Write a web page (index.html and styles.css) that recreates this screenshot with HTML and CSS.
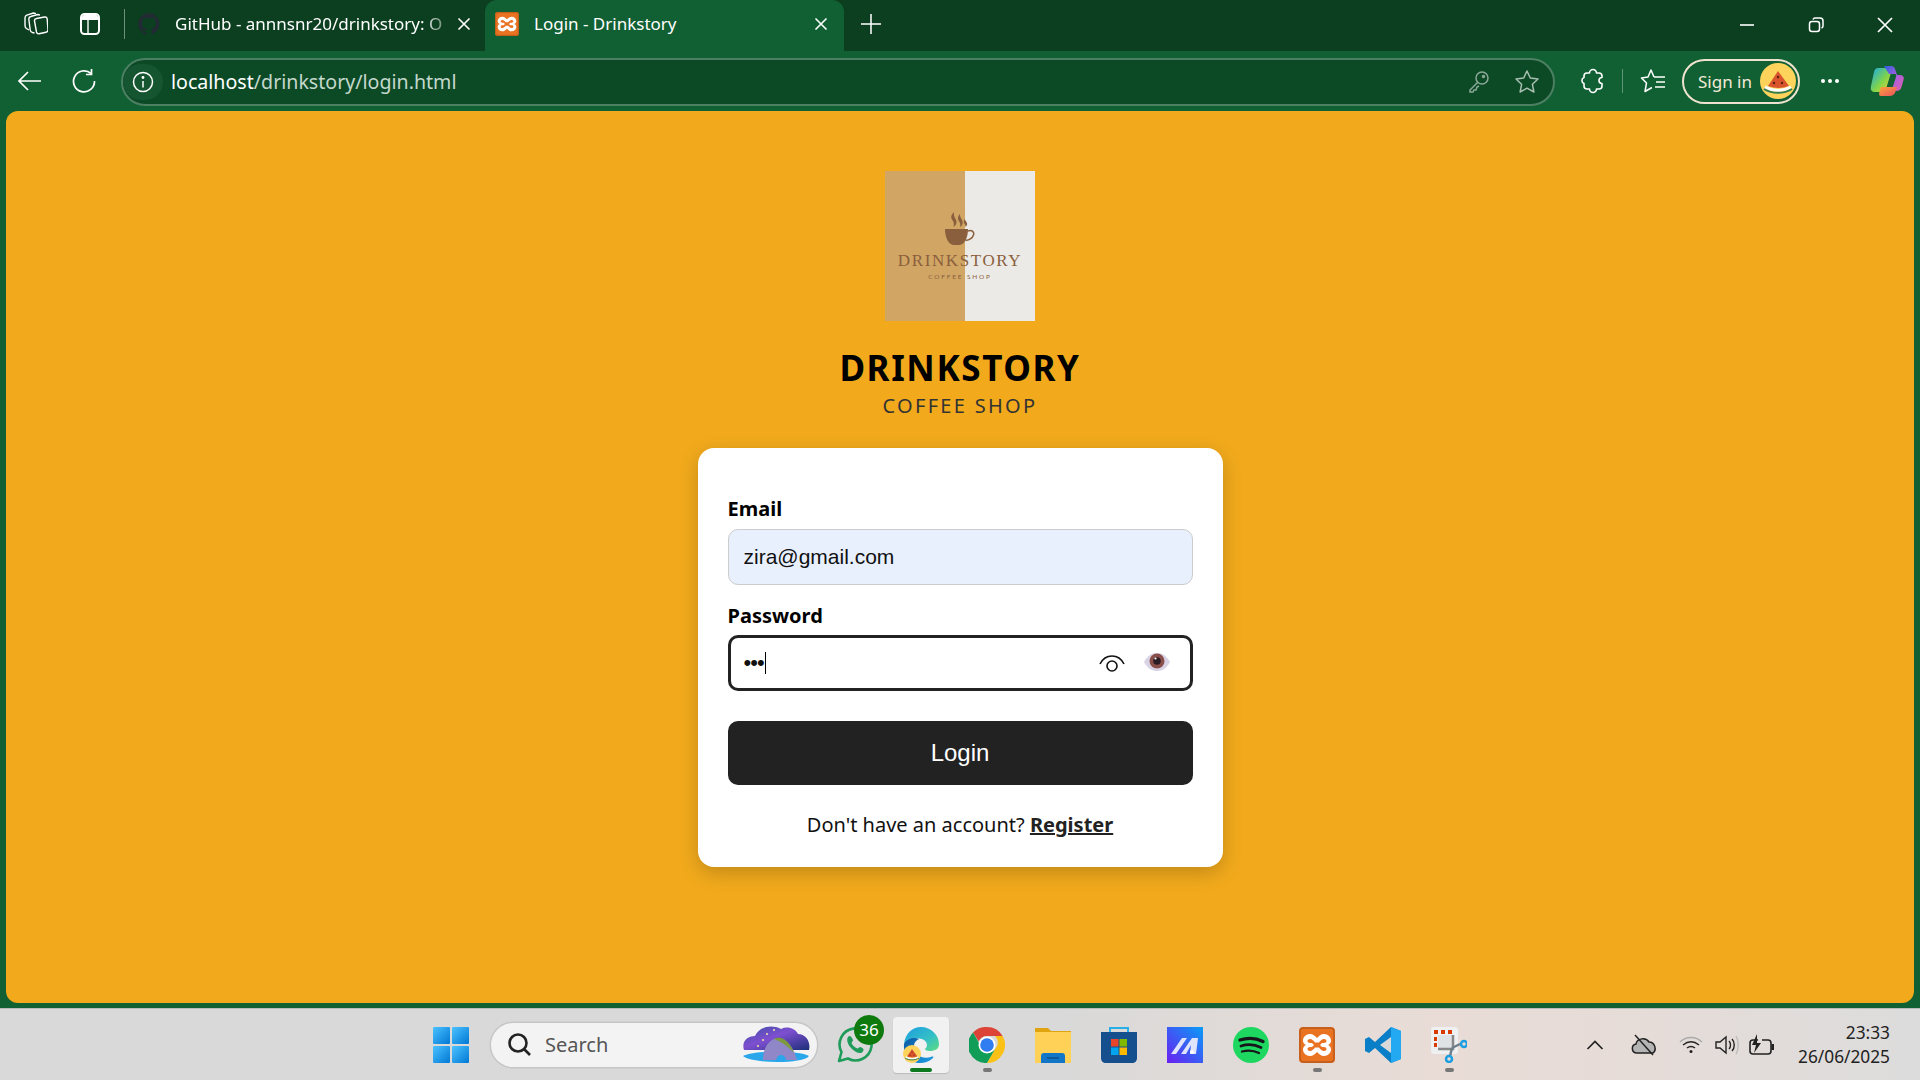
FILE: index.html
```html
<!DOCTYPE html>
<html lang="en">
<head>
<meta charset="utf-8">
<title>Login - Drinkstory</title>
<link rel="stylesheet" href="styles.css">
</head>
<body>
<svg class="defs" width="0" height="0" aria-hidden="true">
  <defs>
    <g id="xampp">
      <rect x="0" y="0" width="36" height="36" rx="4" fill="#ea7322"/>
      <rect x="1" y="1" width="34" height="34" rx="3.500" fill="none" stroke="#b85a1c" stroke-width="1.400"/>
      <path d="M11 7c3 0 5 2 7 4 2-2 4-4 7-4 4 0 7 3 7 6.500 0 2-1 3.500-3 4.500 2 1 3 2.500 3 4.500 0 3.500-3 6.500-7 6.500-3 0-5-2-7-4-2 2-4 4-7 4-4 0-7-3-7-6.500 0-2 1-3.500 3-4.500-2-1-3-2.500-3-4.500C4 10 7 7 11 7z" fill="#fff"/>
      <path d="M11 12c-1.500 0-2.500 1-2.500 2 0 1.200 1.200 2 2.500 2h2l2 2-2 2h-2c-1.300 0-2.500.800-2.500 2 0 1 1 2 2.500 2 2 0 4-2 5-3.500h4c1 1.500 3 3.500 5 3.500 1.500 0 2.500-1 2.500-2 0-1.200-1.200-2-2.500-2h-2l-2-2 2-2h2c1.300 0 2.500-.800 2.500-2 0-1-1-2-2.500-2-2 0-4 2-5 3.500h-4c-1-1.500-3-3.500-5-3.500z" fill="#ea7322"/>
    </g>
    <g id="melon">
      <circle cx="18" cy="18" r="18" fill="#fdd35c"/>
      <path d="M8 23 18 8l11 15c-7 2.500-14 2.500-21 0z" fill="#d9532c"/>
      <path d="M5 24c8 4.500 18 4.500 26 0" fill="none" stroke="#fff" stroke-width="3"/>
      <path d="M4 26c8 5 20 5 28 0" fill="none" stroke="#2f7d4f" stroke-width="2"/>
      <g fill="#5a2412"><circle cx="18" cy="14" r="1.200"/><circle cx="14" cy="20" r="1.200"/><circle cx="22" cy="20" r="1.200"/></g>
    </g>
    <linearGradient id="edgeA" x1="0" y1="0" x2="1" y2="1"><stop offset="0" stop-color="#1b9de2"/><stop offset=".6" stop-color="#35c1c4"/><stop offset="1" stop-color="#5fdc7e"/></linearGradient>
    <linearGradient id="edgeB" x1="0" y1="0" x2="1" y2="1"><stop offset="0" stop-color="#0c59a4"/><stop offset="1" stop-color="#1b9de2"/></linearGradient>
    <linearGradient id="startG" x1="0" y1="0" x2="1" y2="1"><stop offset="0" stop-color="#4cc2ff"/><stop offset="1" stop-color="#0078d4"/></linearGradient>
    <linearGradient id="mG" x1="0" y1="1" x2="1" y2="0"><stop offset="0" stop-color="#6a1ff0"/><stop offset="1" stop-color="#0a9cf8"/></linearGradient>
    <linearGradient id="skyG" x1="0" y1="0" x2="1" y2="1"><stop offset="0" stop-color="#3f4fa8"/><stop offset=".45" stop-color="#7e4fd0"/><stop offset="1" stop-color="#1c2f78"/></linearGradient>
    <linearGradient id="copA" x1="0" y1="0" x2="1" y2="1"><stop offset="0" stop-color="#18a8e8"/><stop offset=".55" stop-color="#7fd44b"/><stop offset="1" stop-color="#f7d23a"/></linearGradient>
    <linearGradient id="copB" x1="0" y1="0" x2="1" y2="1"><stop offset="0" stop-color="#2a5fe0"/><stop offset=".5" stop-color="#a85fe0"/><stop offset="1" stop-color="#e25fa8"/></linearGradient>
    <linearGradient id="copC" x1="0" y1="0" x2="1" y2="1"><stop offset="0" stop-color="#f8a43a"/><stop offset="1" stop-color="#ee4f5f"/></linearGradient>
  </defs>
</svg>

<div class="screen">
  <header class="tabstrip">
    <div class="strip-left">
      <span class="tool"><svg width="24" height="24" viewBox="0 0 24 24" fill="none" stroke="#fff" stroke-width="1.400" stroke-linejoin="round"><path d="M12.500 6.500 20.500 5q2.500-.300 2.700 2l.8 11q0 2-2 2.300l-7 1.500q-2 .300-2.500-1.800L10.500 9q-.3-2 2-2.500z"/><path d="M10.500 21l-2-.500q-2-.600-2.300-2.500L4.800 7q0-2 2-2.500l7-2 2.200.700"/><path d="M5 18 2.500 16.500Q1 15.500 1 13.500L1 6q0-2 1.800-2.800L9.500 1l2.500.700"/></svg></span>
      <span class="tool"><svg width="22" height="24" viewBox="0 0 22 24"><rect x="2" y="2" width="18" height="20" rx="3.500" fill="none" stroke="#fff" stroke-width="2"/><path d="M3 8V5q0-2 2-2h12q2 0 2 2v3z" fill="#fff"/><path d="M9 8v13" stroke="#fff" stroke-width="1.400"/></svg></span>
      <span class="strip-div"></span>
    </div>
    <div class="tab">
      <svg class="tab-ico" width="24" height="24" viewBox="0 0 24 24" fill="#222a33"><path d="M12 1a11 11 0 0 0-3.500 21.400c.5.100.7-.2.700-.5v-2c-3 .6-3.700-1.400-3.700-1.400-.5-1.200-1.200-1.600-1.200-1.600-1-.7.100-.7.100-.7 1.100.1 1.700 1.100 1.700 1.100 1 1.700 2.600 1.200 3.200.9.100-.7.400-1.200.7-1.500-2.400-.3-5-1.200-5-5.400 0-1.200.4-2.200 1.100-2.900-.1-.3-.5-1.400.1-2.900 0 0 .9-.3 3 1.100a10 10 0 0 1 5.500 0c2.100-1.400 3-1.100 3-1.100.6 1.500.2 2.600.1 2.900.7.8 1.100 1.700 1.100 2.900 0 4.200-2.600 5.100-5 5.400.4.300.8 1 .8 2v3c0 .3.200.6.800.5A11 11 0 0 0 12 1z"/></svg>
      <span class="tab-title">GitHub - annnsnr20/drinkstory: O</span>
      <svg class="tab-x" width="14" height="14" viewBox="0 0 14 14" stroke="#fff" stroke-width="1.600"><path d="M1.500 1.500l11 11M12.500 1.500l-11 11"/></svg>
    </div>
    <div class="tab tab-active">
      <svg class="tab-ico" width="24" height="24" viewBox="0 0 36 36"><use href="#xampp"/></svg>
      <span class="tab-title">Login - Drinkstory</span>
      <svg class="tab-x" width="14" height="14" viewBox="0 0 14 14" stroke="#fff" stroke-width="1.600"><path d="M1.500 1.500l11 11M12.500 1.500l-11 11"/></svg>
    </div>
    <span class="newtab"><svg width="22" height="22" viewBox="0 0 22 22" stroke="#fff" stroke-width="1.500"><path d="M11 1v20M1 11h20"/></svg></span>
    <div class="winctl">
      <span class="winbtn"><svg width="16" height="16" viewBox="0 0 16 16" stroke="#fff" stroke-width="1.600"><path d="M1 8h14"/></svg></span>
      <span class="winbtn"><svg width="16" height="16" viewBox="0 0 16 16" fill="none" stroke="#fff" stroke-width="1.500"><rect x="1.500" y="4.500" width="10" height="10" rx="2.500"/><path d="M5 2.500Q5.500 1 7 1h5q3 0 3 3v5q0 1.500-1.500 2"/></svg></span>
      <span class="winbtn"><svg width="16" height="16" viewBox="0 0 16 16" stroke="#fff" stroke-width="1.700"><path d="M1 1l14 14M15 1 1 15"/></svg></span>
    </div>
  </header>

  <nav class="toolbar">
    <span class="navbtn"><svg width="26" height="24" viewBox="0 0 26 24" fill="none" stroke="#fff" stroke-width="1.700"><path d="M24 12H2M11 3l-9 9 9 9"/></svg></span>
    <span class="navbtn"><svg width="26" height="26" viewBox="0 0 26 26" fill="none" stroke="#fff" stroke-width="1.700"><path d="M20 5.500A10.500 10.500 0 1 0 23.500 13"/><path d="M20.500 1v5.500H15"/></svg></span>
    <div class="urlbar">
      <span class="siteinfo"><svg width="22" height="22" viewBox="0 0 22 22" fill="none" stroke="#fff" stroke-width="1.500"><circle cx="11" cy="11" r="9.500"/><path d="M11 10v6.500"/><circle cx="11" cy="6.500" r=".7" fill="#fff"/></svg></span>
      <span class="url"><span class="url-host">localhost</span>/drinkstory/login.html</span>
      <span class="url-actions">
        <svg width="22" height="24" viewBox="0 0 22 24" fill="none" stroke="#8aa897" stroke-width="1.500"><circle cx="14" cy="8" r="6"/><path d="M10 12 2 20v2h3l1-2h2l1-3 2-1"/><circle cx="15.500" cy="6.500" r="1"/></svg>
        <svg width="26" height="26" viewBox="0 0 26 26" fill="none" stroke="#a8bfb1" stroke-width="1.500" stroke-linejoin="round"><path d="M13 2l3.300 7 7.700 1-5.600 5.300 1.500 7.700-6.900-3.800L6.100 23l1.500-7.700L2 10l7.700-1z"/></svg>
      </span>
    </div>
    <span class="navicon nav-ext"><svg width="26" height="26" viewBox="-2 0 26 26" fill="none" stroke="#fff" stroke-width="1.600" stroke-linejoin="round"><path d="M7.500 5A3.500 3.500 0 0 1 14.500 5H17Q20 5 20 8V9.500A3 3 0 0 0 20 15.500V18Q20 21 17 21H14.500A3.500 3.500 0 0 1 7.500 21H5Q2 21 2 18V15.500A3.200 3.200 0 0 1 2 9.500V8Q2 5 5 5z"/></svg></span>
    <span class="nav-div"></span>
    <span class="navicon"><svg width="26" height="26" viewBox="0 0 26 26" fill="none" stroke="#fff" stroke-width="1.500" stroke-linejoin="round"><path d="M14 9 11 2 8 9 1.500 10l5 5L5 23.500 12 19.500"/><path d="M14 9H25M16 14H25M15 19H25"/></svg></span>
    <div class="signin">
      <span class="signin-text">Sign in</span>
      <svg width="36" height="36" viewBox="0 0 36 36"><use href="#melon"/></svg>
    </div>
    <span class="navicon nav-dots"><svg width="20" height="6" viewBox="0 0 20 6" fill="#fff"><circle cx="3" cy="3" r="2"/><circle cx="10" cy="3" r="2"/><circle cx="17" cy="3" r="2"/></svg></span>
    <span class="navicon nav-cop"><svg width="34" height="32" viewBox="0 0 34 32"><path d="M8 3h10c2 0 3 1 3.500 3L16 24c-.5 2-2 3-4 3H5c-3 0-5-2-4-6L4 7c.5-2.500 2-4 4-4z" fill="url(#copA)"/><path d="M14 1h7c2 0 3.500 1 4 3l2 6h3c3 0 4.500 2 3.500 5l-2 7c-1 3-3 4-5 4h-5L26 12c.5-2 0-3-1-3h-6z" fill="url(#copB)"/><path d="M11 22h13l3 0c-1 5-3 9-7 9h-9c-3 0-2-3 0-9z" fill="url(#copC)"/></svg></span>
  </nav>

  <main class="page">
    <div class="logo">
      <svg class="logo-cup" width="30" height="34" viewBox="0 0 30 34" fill="#8a5f3d"><path d="M9 0c-4 4-3 6-1 9 1 2 1 4 .5 6 3-2 4-5 2-8-1-2-2-4-1.500-7zM15 2c-3 3-2 6-.500 8 1 1.500 1 3 .5 5 2.500-1.500 3.500-4 2-7-1-2-2.200-3.500-2-6zM20 7c-2 2-1 4 0 5.500.5 1 .5 1.800.2 2.500 2-1 2.500-3 1.300-5-.8-1-1.500-1.800-1.500-3z"/><path d="M0 17h23c0 8-3 15-8 16H8C3 32 0 25 0 17z"/><path d="M23 19c4-1.500 6.500 1 5.500 4-1 3-4 5-8 5.500" fill="none" stroke="#8a5f3d" stroke-width="1.500"/></svg>
      <span class="logo-name">DRINKSTORY</span>
      <span class="logo-sub">COFFEE SHOP</span>
    </div>
    <h1 class="brand">DRINKSTORY</h1>
    <p class="brand-sub">COFFEE SHOP</p>
    <form class="card">
      <div class="group">
        <label class="label">Email</label>
        <div class="field field-filled">zira@gmail.com</div>
      </div>
      <div class="group">
        <label class="label">Password</label>
        <div class="field field-focus">
          <span class="dots">•••</span><span class="caret"></span>
          <svg class="eye-line" width="28" height="20" viewBox="0 0 28 20" fill="none" stroke="#111" stroke-width="1.600"><path d="M2 11C5 5 9 3 14 3s9 2 12 8"/><circle cx="14" cy="13" r="5"/></svg>
          <svg class="eye-emoji" width="28" height="20" viewBox="0 0 28 20"><path d="M1 10C5 3 9 1 14 1s9 2 13 9c-4 7-8 9-13 9S5 17 1 10z" fill="#d9d3e6"/><circle cx="14" cy="9" r="7.500" fill="#8a4f4a"/><circle cx="14" cy="9" r="3.800" fill="#2a1c24"/><circle cx="12.500" cy="6.500" r="1.100" fill="#fff"/></svg>
        </div>
      </div>
      <button class="btn" type="button">Login</button>
      <p class="foot">Don't have an account? <a class="reg" href="#">Register</a></p>
    </form>
  </main>

  <div class="green-edge"></div>

  <footer class="taskbar">
    <div class="tb-center">
      <span class="tb-start"><svg width="36" height="36" viewBox="0 0 36 36" fill="url(#startG)"><rect width="17" height="17" rx="1"/><rect x="19" width="17" height="17" rx="1"/><rect y="19" width="17" height="17" rx="1"/><rect x="19" y="19" width="17" height="17" rx="1"/></svg></span>
      <div class="search">
        <svg width="24" height="26" viewBox="0 0 24 26" fill="none" stroke="#222" stroke-width="2.600"><circle cx="11" cy="11" r="8.500"/><path d="M17 17l6 6"/></svg>
        <span class="search-text">Search</span>
        <svg class="search-art" width="70" height="42" viewBox="0 0 70 42"><path d="M3 26C0 16 8 12 14 12 18 3 30 0 40 5c6-3 14-1 17 5 8 0 13 8 11 16z" fill="url(#skyG)"/><path d="M2 32c10-6 56-6 66 0-6 8-56 8-66 0z" fill="#2aa6ea"/><path d="M22 36c0-10 4-20 14-22 10 1 16 8 20 22H45c-1-6-8-7-10 0z" fill="#8f87c8"/><path d="M33 15c8-4 16 3 20 14-5-6-12-11-20-14z" fill="#7d9a3c"/><g fill="#f6e6a8"><circle cx="33" cy="6" r="1"/><circle cx="26" cy="10" r="1"/><circle cx="22" cy="16" r="1"/><circle cx="17" cy="22" r="1"/></g></svg>
      </div>
      <span class="tb-app tb-wa">
        <svg width="38" height="38" viewBox="0 0 38 38" fill="none"><path d="M3 35l2.500-9A16 16 0 1 1 12 32.500z" stroke="#1f9c5a" stroke-width="2.600" stroke-linejoin="round"/><path d="M12 11c1-2 3-1 4 1l1 2c0 1-1 2-1.500 3 1 2.500 3 4.500 6 5.500 1-.5 2-2 3-1.500l2.500 1.500c1 1 .5 3-1 4-3 1.500-7-.5-10.500-4S10 14 12 11z" fill="#1f9c5a"/></svg>
        <span class="wa-badge">36</span>
      </span>
      <span class="tb-app tb-active">
        <svg width="36" height="36" viewBox="0 0 36 36"><path d="M1 17C2 7 9 0 18 0c10 0 18 8 18 17 0 5-4 7-9 7-3 0-5-1-5-2 3-2 3-8-3-10C12 10 4 12 1 17z" fill="url(#edgeA)"/><path d="M1 17c3-6 11-7 15-5-5 2-7 8-3 14 3 4 9 6 15 4 2-1 3 0 2 1-4 4-9 5-13 5C8 36 0 28 1 17z" fill="url(#edgeB)"/><svg x="0" y="18" width="18" height="18" viewBox="0 0 36 36"><use href="#melon"/></svg></svg>
        <span class="tb-pill"></span>
      </span>
      <span class="tb-app tb-open">
        <svg width="36" height="36" viewBox="0 0 36 36"><path d="M18 0a18 18 0 0 1 15.600 9H18a9 9 0 0 0-8.300 5.500L4 5.500A18 18 0 0 1 18 0z" fill="#db4437"/><path d="M33.600 9A18 18 0 0 1 18 36l7.800-13.500A9 9 0 0 0 26 9z" fill="#fbc116"/><path d="M4 5.500 11.800 19A8 8 0 0 0 25.800 22.500L18 36A18 18 0 0 1 4 5.500z" fill="#0f9d58"/><circle cx="18" cy="18" r="8.500" fill="#fff"/><circle cx="18" cy="18" r="6.800" fill="#2f7df0"/></svg>
        <span class="tb-dot"></span>
      </span>
      <span class="tb-app">
        <svg width="36" height="36" viewBox="0 0 36 36"><path d="M0 1h13l3 3h20v6H0z" fill="#e0a410"/><rect y="5" width="36" height="31" fill="#ffd257"/><path d="M6 36v-7c0-2 1-3 3-3h18c2 0 3 1 3 3v7z" fill="#1176c8"/><path d="M12 31h12" stroke="#0a4f8c" stroke-width="1.500"/></svg>
      </span>
      <span class="tb-app">
        <svg width="36" height="36" viewBox="0 0 36 36"><path d="M9 5V1h18v4" fill="none" stroke="#27b0e8" stroke-width="2"/><path d="M0 5h36v26c0 3-2 5-5 5H5c-3 0-5-2-5-5z" fill="#164f8e"/><rect x="10" y="12" width="7.500" height="7.500" fill="#e8452c"/><rect x="18.500" y="12" width="7.500" height="7.500" fill="#7fb900"/><rect x="10" y="20.500" width="7.500" height="7.500" fill="#00a4ef"/><rect x="18.500" y="20.500" width="7.500" height="7.500" fill="#ffb900"/></svg>
      </span>
      <span class="tb-app">
        <svg width="36" height="36" viewBox="0 0 36 36"><rect width="36" height="36" fill="url(#mG)"/><path d="M4 27 15 11h5L9 27zM14 27 25 11h6l-2 16h-6l1-9-5 9z" fill="#dfe3fb"/><circle cx="25" cy="25" r="2" fill="#fff"/></svg>
      </span>
      <span class="tb-app">
        <svg width="36" height="36" viewBox="0 0 36 36"><circle cx="18" cy="18" r="18" fill="#1ed760"/><g fill="none" stroke="#16161a" stroke-linecap="round"><path d="M7 13c8-2.500 16-2 23 1.500" stroke-width="3.400"/><path d="M8 19c6.500-2 14-1.500 20 1.500" stroke-width="2.800"/><path d="M9 24.500c6-1.500 12-1 17 1.500" stroke-width="2.300"/></g></svg>
      </span>
      <span class="tb-app tb-open">
        <svg width="36" height="36" viewBox="0 0 36 36"><use href="#xampp"/></svg>
        <span class="tb-dot"></span>
      </span>
      <span class="tb-app">
        <svg width="36" height="36" viewBox="0 0 36 36"><path d="M26 0 36 4v28l-10 4-16-15-6 5-4-2V12l4-2 6 5z" fill="#0a7fc8"/><path d="M26 0 36 4v28l-10 4z" fill="#23a9f2"/><path d="M26 10 15 18l11 8z" fill="#d9d9d9"/></svg>
      </span>
      <span class="tb-app tb-open">
        <svg width="36" height="36" viewBox="0 0 36 36"><rect width="27" height="27" rx="3" fill="#eef0f2"/><path d="M3 3h4v4H3zM10 3h4v4h-4zM17 3h4v4h-4zM3 10h3v4H3zM3 16h3v4H3z" fill="#d83b01"/><path d="M7 8h15v14H7z" fill="#dfe3e6"/><path d="M22 8v14H7" fill="none" stroke="#888" stroke-width="2.500"/><path d="M21 21l-2 8M21 21l8-4" stroke="#6e7f8a" stroke-width="2.500"/><circle cx="18" cy="32" r="3" fill="none" stroke="#1b9de2" stroke-width="2.500"/><circle cx="33" cy="17" r="3" fill="none" stroke="#1b9de2" stroke-width="2.500"/></svg>
        <span class="tb-dot"></span>
      </span>
    </div>
    <div class="tray">
      <svg class="tray-chev" width="18" height="10" viewBox="0 0 18 10" fill="none" stroke="#222" stroke-width="1.700"><path d="M1.500 9 9 1.500 16.500 9"/></svg>
      <svg class="tray-cloud" width="26" height="22" viewBox="0 0 26 22"><path d="M6 19c-6 0-6-8-1-9 1-6 10-7 13-2 6 0 8 8 4 11z" fill="#b4b4b4" stroke="#222" stroke-width="1.500"/><path d="M4 1l18 20" stroke="#222" stroke-width="1.500"/></svg>
      <svg class="tray-wifi" width="24" height="20" viewBox="0 0 24 20" fill="none" stroke="#222" stroke-width="1.500"><path d="M1 7c6-6 16-6 22 0" stroke="#aaa"/><path d="M4 10c5-4 11-4 16 0M8 13c2.500-2 5.500-2 8 0"/><circle cx="12" cy="16.500" r="1.500" fill="#222" stroke="none"/></svg>
      <svg class="tray-vol" width="24" height="22" viewBox="0 0 24 22" fill="none" stroke="#222" stroke-width="1.400"><path d="M1 8v6h4l6 5V3L5 8z"/><path d="M14 7c2 2 2 6 0 8M17 5c3 3 3 9 0 12"/><path d="M21 2c3 5 3 13 0 18" stroke="#bbb"/></svg>
      <svg class="tray-bat" width="26" height="22" viewBox="0 0 26 22" fill="none" stroke="#222" stroke-width="1.600"><path d="M9 6H4Q1 6 1 9v8q0 3 3 3h15q3 0 3-3V9q0-3-3-3h-6"/><rect x="22.500" y="10" width="2.500" height="6" fill="#222" stroke="none"/><path d="M8 0 3 11h4l-2 8 7-10H8z" fill="#222" stroke="none"/></svg>
      <div class="clock"><span>23:33</span><span>26/06/2025</span></div>
    </div>
  </footer>
</div>
</body>
</html>
```
FILE: styles.css
```css
* { box-sizing: border-box; }
html, body { margin: 0; padding: 0; height: 100%; overflow: hidden; }
body { font-family: "Noto Sans", "Open Sans", sans-serif; color: #000; }
.defs { position: absolute; }
svg { display: block; flex: none; }

.screen { width: 1920px; height: 1080px; display: flex; flex-direction: column; background: #116033; }

/* tab strip */
.tabstrip { height: 51px; flex: none; display: flex; align-items: stretch; background: #0c3f20; color: #fff; }
.strip-left { display: flex; align-items: center; width: 128px; padding: 0 0 3px 14px; gap: 12px; }
.tool { width: 44px; display: flex; justify-content: center; }
.tool + .tool { margin-left: -2px; }
.strip-div { width: 1px; height: 30px; background: #6f8f7d; }
.tab { width: 357px; display: flex; align-items: center; padding: 0 14px 3px 9px; font-size: 17px; }
.tab-ico { margin-right: 14px; }
.tab-title { flex: 1; margin-bottom: 2px; overflow: hidden; white-space: nowrap; -webkit-mask-image: linear-gradient(90deg, #000 90%, rgba(0,0,0,.25)); mask-image: linear-gradient(90deg, #000 90%, rgba(0,0,0,.25)); }
.tab-x { margin-left: 8px; }
.tab-active { background: #116033; border-radius: 12px 12px 0 0; width: 359px; padding: 0 16px 3px 10px; }
.tab-active .tab-ico { margin-right: 15px; }
.tab-active .tab-title { -webkit-mask-image: none; mask-image: none; }
.newtab { width: 54px; padding-bottom: 3px; display: flex; align-items: center; justify-content: center; }
.winctl { margin-left: auto; display: flex; align-items: center; padding: 0 1px 2px 0; }
.winbtn { width: 69px; display: flex; justify-content: center; }

/* toolbar */
.toolbar { height: 60px; flex: none; display: flex; align-items: center; padding: 0 0 0 16px; color: #fff; }
.navbtn { width: 28px; margin-right: 26px; display: flex; justify-content: center; }
.navbtn + .navbtn { margin-right: 23px; }
.urlbar { width: 1434px; height: 48px; flex: none; margin-top: 1px; display: flex; align-items: center; background: #0c4a26; border: 2px solid #4d7f63; border-radius: 24px; padding: 0 13px 0 0; }
.siteinfo { width: 40px; height: 36px; border-radius: 18px; display: flex; align-items: center; justify-content: center; background: #15552f; }
.url { margin-left: 8px; font-size: 19.600px; color: #c4d8cc; }
.url-host { color: #fff; }
.url-actions { margin-left: auto; display: flex; align-items: center; gap: 24px; }
.navicon { display: flex; justify-content: center; }
.nav-ext { width: 26px; margin-left: 25px; }
.nav-div { width: 1px; height: 24px; margin: 0 17px 0 16px; background: #5f9477; }
.signin { width: 118px; height: 45px; margin-left: 16px; display: flex; align-items: center; justify-content: space-between; padding: 0 2px 0 14px; border: 2px solid #efe3cf; border-radius: 23px; }
.signin-text { font-size: 17px; color: #f4ead8; }
.nav-dots { margin-left: 20px; }
.nav-cop { margin-left: 30px; }

/* page */
.page { height: 892px; flex: none; margin: 0 6px; background: #f2aa1c; border-radius: 12px; padding-top: 60px; display: flex; flex-direction: column; align-items: center; }
.logo { width: 150px; height: 150px; flex: none; display: flex; flex-direction: column; align-items: center; padding-top: 41px; background: linear-gradient(90deg, #d1a665 0, #d1a665 80px, #ebeae6 80px); color: #8a5f3d; }
.logo-cup { margin: 0 0 5px -1px; }
.logo-name { font-family: "Liberation Serif", serif; font-size: 17px; line-height: 20px; letter-spacing: 1.600px; }
.logo-sub { font-family: "Lato", sans-serif; font-size: 6.500px; line-height: 12px; letter-spacing: 1.800px; }
.brand { margin: 25px 0 0; font-size: 35px; line-height: 44px; font-weight: 700; letter-spacing: 1.600px; color: #000; }
.brand-sub { margin: 1px 0 0; font-size: 20px; line-height: 30px; letter-spacing: 2.300px; color: #333; }

.card { width: 525px; height: 419px; margin-top: 27px; background: #fff; border-radius: 16px; box-shadow: 0 6px 20px rgba(0,0,0,.2); padding: 47px 30px 0; }
.group { margin-bottom: 17px; }
.group:nth-child(2) { margin-bottom: 30px; }
.label { display: block; font-size: 20px; font-weight: 700; line-height: 27px; margin-bottom: 7px; }
.group:nth-child(2) .label { margin-bottom: 6px; }
.field { height: 56px; display: flex; align-items: center; padding: 0 15px; border: 1px solid #ccc; border-radius: 10px; font-family: "Liberation Sans", sans-serif; font-size: 21px; color: #111; }
.field-filled { background: #e8f0fe; }
.field-focus { border: 3px solid #222; padding: 0 13px; }
.dots { font-size: 22px; letter-spacing: -1px; }
.caret { width: 1px; height: 22px; margin-left: 1px; background: #000; }
.eye-line { margin-left: auto; margin-top: -1px; }
.eye-emoji { margin: -3px 6px 0 17px; }
.btn { display: block; width: 100%; height: 64px; border: 0; border-radius: 10px; background: #222; color: #fff; font-family: "Liberation Sans", sans-serif; font-size: 24px; }
.foot { margin: 25px 0 0; text-align: center; font-size: 20px; line-height: 30px; color: #111; }
.reg { font-weight: 700; color: #222; text-decoration: underline; }

/* taskbar */
.green-edge { height: 5px; flex: none; }
.taskbar { height: 72px; flex: none; display: flex; align-items: stretch; position: relative; border-top: 1px solid #b9b9b9; background: linear-gradient(90deg, #d9d9d9 0, #d9d9d9 55%, #e9dcd6 75%, #e6dcd8 85%, #dcdcdc 100%); }
.tb-center { display: flex; align-items: center; padding-left: 433px; }
.tb-start { width: 36px; margin-right: 22px; }
.search { width: 326px; height: 44px; flex: none; display: flex; align-items: center; padding: 0 6px 0 16px; background: #f3f3f3; border-radius: 22px; box-shadow: 0 0 0 1.500px #c6c6c6; }
.search-text { margin-left: 14px; font-size: 20px; color: #555; }
.search-art { margin-left: auto; }
.tb-app { width: 66px; height: 56px; flex: none; position: relative; display: flex; align-items: center; justify-content: center; }
.tb-wa { margin-left: 5px; }
.tb-active::before { content: ""; position: absolute; left: 5px; right: 5px; top: 0; bottom: 0; background: #f1f1f1; border-radius: 4px; box-shadow: 0 1px 1px #bbb; }
.tb-active > svg { position: relative; }
.tb-pill { position: absolute; left: 22px; bottom: 1px; width: 22px; height: 4px; border-radius: 2px; background: #0e7a20; }
.tb-dot { position: absolute; left: 29px; bottom: 1px; width: 9px; height: 4px; border-radius: 2px; background: #777; }
.wa-badge { position: absolute; left: 32px; top: -2px; width: 30px; height: 30px; border-radius: 50%; background: #0e7a0e; color: #fff; font-size: 17px; line-height: 29px; text-align: center; }
.tray { margin-left: auto; display: flex; align-items: center; padding-right: 30px; }
.tray-chev { margin-right: 27px; }
.tray-cloud { margin-right: 22px; }
.tray-wifi { margin-right: 12px; }
.tray-vol { margin-right: 10px; }
.tray-bat { margin-right: 23px; }
.clock { display: flex; flex-direction: column; align-items: flex-end; font-size: 17.300px; line-height: 24px; color: #222; }
```
